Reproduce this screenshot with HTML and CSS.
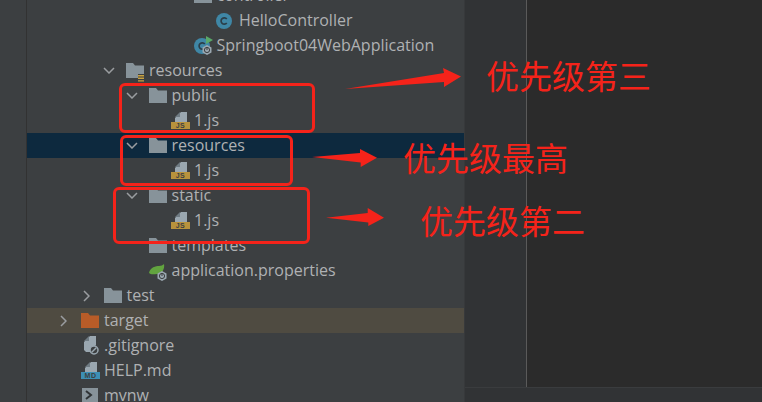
FILE: index.html
```html
<!DOCTYPE html>
<html lang="zh-CN">
  <head>
    <meta name="viewport" content="width=device-width, initial-scale=1.0" />
    <title>Project tree</title>
    <link rel="stylesheet" href="styles.css">
  </head>
  <body>
    <svg class="defs" width="0" height="0">
      <symbol id="folder" viewBox="0 0 18 15"><path d="M0 0h7l2 2.500h9V15H0z" fill="#87939a"/></symbol>
      <symbol id="folder-res" viewBox="0 0 18 19">
        <path d="M0 0h7l2 2.500h9V11h-6v4H0z" fill="#87939a"/>
        <path d="M12 12h6v1.400h-6zM12 14.600h6V16h-6zM12 17.200h6v1.400h-6z" fill="#c9a13f"/>
      </symbol>
      <symbol id="folder-orange" viewBox="0 0 18 15"><path d="M0 0h7l2 2.500h9V15H0z" fill="#b85c28"/></symbol>
      <symbol id="chev-down" viewBox="0 0 12 7"><path d="M1 1l5 5 5-5" fill="none" stroke="#9a9da0" stroke-width="1.500"/></symbol>
      <symbol id="chev-right" viewBox="0 0 7 12"><path d="M1 1l5 5-5 5" fill="none" stroke="#9a9da0" stroke-width="1.500"/></symbol>
      <symbol id="page" viewBox="0 0 12 10">
        <path d="M0 10V6l6-6h6v10z" fill="#9aa7b0"/>
        <path d="M0 5l5-5v5z" fill="#6e7a82"/>
      </symbol>
      <symbol id="cls" viewBox="0 0 16 16">
        <circle cx="8" cy="8" r="8" fill="#3f87a6"/>
        <path d="M10.800 6a3.200 3.200 0 1 0 0 4" fill="none" stroke="#2b3f4a" stroke-width="1.700"/>
      </symbol>
      <symbol id="boot" viewBox="0 0 10 10">
        <path d="M5 0l4.500 2.500v5L5 10 .5 7.500v-5z" fill="#9aa7b0"/>
        <circle cx="5" cy="5" r="2.600" fill="none" stroke="#3c3f41" stroke-width="1"/>
        <path d="M5 2v3" stroke="#3c3f41" stroke-width="1"/>
      </symbol>
    </svg>

    <div class="ide">
      <div class="toolstrip"></div>

      <div class="tree">
        <div class="row d5">
          <span class="arrow"></span>
          <span class="icon"><svg class="ico-folder"><use href="#folder"/></svg></span>
          <span class="label">controller</span>
        </div>
        <div class="row d6">
          <span class="arrow"></span>
          <span class="icon"><svg class="ico-cls"><use href="#cls"/></svg></span>
          <span class="label">HelloController</span>
        </div>
        <div class="row d5">
          <span class="arrow"></span>
          <span class="icon">
            <svg class="ico-cls"><use href="#cls"/></svg>
            <svg class="run-mark" viewBox="0 0 7 8"><path d="M0 0l7 4-7 4z" fill="#59a869"/></svg>
            <svg class="boot-mark"><use href="#boot"/></svg>
          </span>
          <span class="label">Springboot04WebApplication</span>
        </div>
        <div class="row d2">
          <span class="arrow"><svg class="chev-down"><use href="#chev-down"/></svg></span>
          <span class="icon"><svg class="ico-res"><use href="#folder-res"/></svg></span>
          <span class="label">resources</span>
        </div>
        <div class="row d3">
          <span class="arrow"><svg class="chev-down"><use href="#chev-down"/></svg></span>
          <span class="icon"><svg class="ico-folder"><use href="#folder"/></svg></span>
          <span class="label">public</span>
        </div>
        <div class="row d4">
          <span class="arrow"></span>
          <span class="icon file-icon">
            <svg class="ico-page"><use href="#page"/></svg>
            <span class="band band-js">JS</span>
          </span>
          <span class="label">1.js</span>
        </div>
        <div class="row d3 selected">
          <span class="arrow"><svg class="chev-down"><use href="#chev-down"/></svg></span>
          <span class="icon"><svg class="ico-folder"><use href="#folder"/></svg></span>
          <span class="label">resources</span>
        </div>
        <div class="row d4">
          <span class="arrow"></span>
          <span class="icon file-icon">
            <svg class="ico-page"><use href="#page"/></svg>
            <span class="band band-js">JS</span>
          </span>
          <span class="label">1.js</span>
        </div>
        <div class="row d3">
          <span class="arrow"><svg class="chev-down"><use href="#chev-down"/></svg></span>
          <span class="icon"><svg class="ico-folder"><use href="#folder"/></svg></span>
          <span class="label">static</span>
        </div>
        <div class="row d4">
          <span class="arrow"></span>
          <span class="icon file-icon">
            <svg class="ico-page"><use href="#page"/></svg>
            <span class="band band-js">JS</span>
          </span>
          <span class="label">1.js</span>
        </div>
        <div class="row d3">
          <span class="arrow"></span>
          <span class="icon"><svg class="ico-folder"><use href="#folder"/></svg></span>
          <span class="label">templates</span>
        </div>
        <div class="row d3">
          <span class="arrow"></span>
          <span class="icon">
            <svg class="ico-leaf" viewBox="0 0 16 12"><path d="M0 9C1 3 7 2 10 2c2 0 4-1 5-2 1 5-2 10-7 10-3 0-6 1-8-1z" fill="#62a43f"/></svg>
            <svg class="boot-mark leaf-boot"><use href="#boot"/></svg>
          </span>
          <span class="label">application.properties</span>
        </div>
        <div class="row d1">
          <span class="arrow"><svg class="chev-right"><use href="#chev-right"/></svg></span>
          <span class="icon"><svg class="ico-folder"><use href="#folder"/></svg></span>
          <span class="label">test</span>
        </div>
        <div class="row d0 excluded">
          <span class="arrow"><svg class="chev-right"><use href="#chev-right"/></svg></span>
          <span class="icon"><svg class="ico-folder"><use href="#folder-orange"/></svg></span>
          <span class="label">target</span>
        </div>
        <div class="row d0">
          <span class="arrow"></span>
          <span class="icon">
            <svg class="ico-ignore" viewBox="0 0 16 19">
              <path d="M1 14V6l6-6h6v9l-4 3-2 4H3z" fill="#9aa7b0"/>
              <path d="M1 5l5-5v5z" fill="#6e7a82"/>
              <circle cx="11" cy="14" r="4" fill="#3c3f41" stroke="#9aa7b0" stroke-width="1.500"/>
              <path d="M8.500 16.500l5-5" stroke="#9aa7b0" stroke-width="1.500"/>
            </svg>
          </span>
          <span class="label">.gitignore</span>
        </div>
        <div class="row d0">
          <span class="arrow"></span>
          <span class="icon file-icon">
            <svg class="ico-page"><use href="#page"/></svg>
            <span class="band band-md">MD</span>
          </span>
          <span class="label">HELP.md</span>
        </div>
        <div class="row d0">
          <span class="arrow"></span>
          <span class="icon">
            <svg class="ico-shell" viewBox="0 0 16 16">
              <path d="M0 0h16v16H0z" fill="#87939a"/>
              <path d="M4 3l5 4-5 4" fill="none" stroke="#2f3335" stroke-width="2"/>
            </svg>
          </span>
          <span class="label">mvnw</span>
        </div>
      </div>

      <div class="workspace">
        <div class="editor">
          <div class="editor-gutter"></div>
          <div class="editor-body"></div>
        </div>
        <div class="statusbar"></div>
      </div>
    </div>

    <!-- hand drawn notes on top of the screenshot -->
    <div class="mark mark-public"></div>
    <div class="mark mark-resources"></div>
    <div class="mark mark-static"></div>

    <svg class="arrows" width="762" height="402" viewBox="0 0 762 402">
      <path d="M345 89L444 73 443 68 461 76.500 444 87 444 82z"/>
      <path d="M312 157L360 153 360 149 377 157.700 360.700 167 360.700 162.500z"/>
      <path d="M326 217.700L367.700 213 367.700 208 384 217.700 368.300 226 368.300 222.500z"/>
    </svg>

    <div class="note note-third">优先级第三</div>
    <div class="note note-top">优先级最高</div>
    <div class="note note-second">优先级第二</div>
  </body>
</html>
```

FILE: styles.css
```css
* {
  padding: 0;
  margin: 0;
  box-sizing: border-box;
}
html,
body {
  width: 762px;
  height: 402px;
  overflow: hidden;
  background-color: #2b2b2b;
}
body {
  position: relative;
  font-family: "Open Sans", "Noto Sans", sans-serif;
}
.defs {
  position: absolute;
}
.ide {
  display: flex;
  height: 402px;
}
.toolstrip {
  width: 27px;
  flex: none;
  background-color: #3c3f41;
  border-right: 1px solid #323232;
}
.tree {
  width: 438px;
  flex: none;
  height: 402px;
  overflow: hidden;
  background-color: #3c3f41;
  border-right: 1px solid #37393b;
}
.row {
  display: flex;
  align-items: center;
  height: 25px;
  font-size: 16px;
  color: #afb1b3;
  white-space: nowrap;
}
.row:first-child {
  margin-top: -17px;
}
.label {
  margin-left: 1px;
  margin-top: -2px;
}
.selected {
  background-color: #0d293e;
}
.excluded {
  background-color: #4f4b41;
}
/* each level of the tree moves 22.5px to the right */
.d0 { padding-left: 31px; }
.d1 { padding-left: 53.5px; }
.d2 { padding-left: 76px; }
.d3 { padding-left: 98.5px; }
.d4 { padding-left: 121px; }
.d5 { padding-left: 143.5px; }
.d6 { padding-left: 166px; }
.arrow {
  width: 23px;
  flex: none;
  display: flex;
  align-items: center;
}
.chev-down {
  width: 12px;
  height: 7px;
}
.chev-right {
  width: 7px;
  height: 12px;
  margin-left: 2px;
}
.icon {
  width: 22px;
  height: 25px;
  flex: none;
  position: relative;
  display: flex;
  align-items: center;
}
.ico-folder {
  width: 18px;
  height: 15px;
}
.ico-res {
  width: 18px;
  height: 19px;
  margin-top: 3px;
}
.ico-cls {
  width: 16px;
  height: 16px;
}
.ico-ignore {
  width: 16px;
  height: 19px;
  margin-left: 2px;
}
.ico-shell {
  width: 16px;
  height: 16px;
  margin-left: 1px;
}
.ico-leaf {
  width: 16px;
  height: 12px;
  margin-top: -1px;
}
.run-mark {
  position: absolute;
  left: 12px;
  top: 3px;
  width: 7px;
  height: 8px;
}
.boot-mark {
  position: absolute;
  left: 8px;
  top: 12px;
  width: 10px;
  height: 10px;
}
.leaf-boot {
  left: 8px;
  top: 13px;
}
.file-icon {
  display: block;
}
.ico-page {
  position: absolute;
  left: 4px;
  top: 4px;
  width: 12px;
  height: 10px;
}
.band {
  position: absolute;
  left: 0;
  top: 14px;
  width: 19px;
  height: 7px;
  font-family: "Liberation Sans", sans-serif;
  font-size: 7px;
  line-height: 7px;
  font-weight: 700;
  letter-spacing: 0.5px;
  text-align: center;
  color: #3c3f41;
}
.band-js {
  background-color: #b8923c;
}
.band-md {
  background-color: #3d8fb5;
}
.workspace {
  flex: 1;
  display: flex;
  flex-direction: column;
}
.editor {
  flex: 1;
  display: flex;
}
.editor-gutter {
  width: 62px;
  flex: none;
  background-color: #313335;
  border-right: 1px solid #5a5a5a;
}
.editor-body {
  flex: 1;
  background-color: #2b2b2b;
}
.statusbar {
  height: 15px;
  flex: none;
  background-color: #313335;
  border-top: 1px solid #3a3c3e;
}
.mark {
  position: absolute;
  border: 3px solid #f5231a;
  border-radius: 6px;
}
.mark-public {
  left: 119px;
  top: 83px;
  width: 196px;
  height: 50px;
}
.mark-resources {
  left: 120px;
  top: 135px;
  width: 173px;
  height: 51px;
}
.mark-static {
  left: 113px;
  top: 187px;
  width: 197px;
  height: 57px;
}
.arrows {
  position: absolute;
  left: 0;
  top: 0;
  fill: #f5231a;
}
.note {
  position: absolute;
  font-family: "Noto Sans CJK SC", sans-serif;
  font-size: 33px;
  line-height: 40px;
  color: #f5231a;
  white-space: nowrap;
}
.note-third {
  left: 486px;
  top: 55px;
}
.note-top {
  left: 403px;
  top: 137px;
}
.note-second {
  left: 420px;
  top: 200px;
}
```
